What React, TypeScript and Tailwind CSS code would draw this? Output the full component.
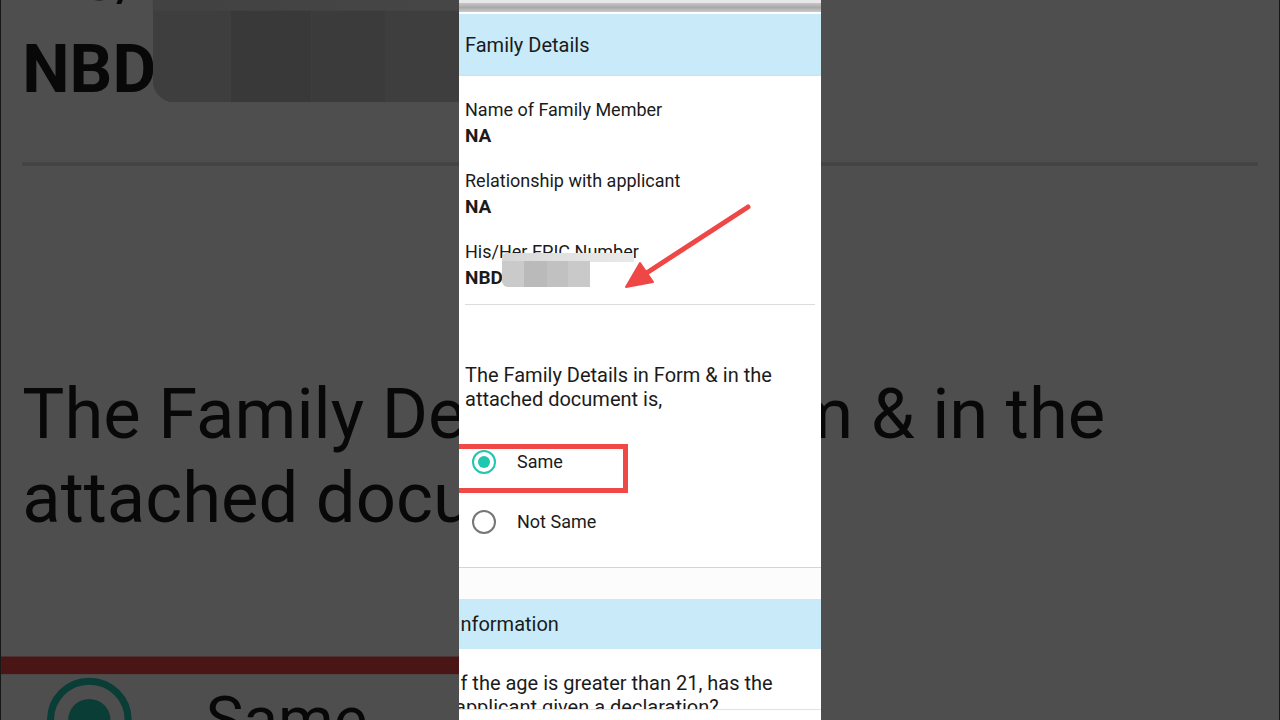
import React from "react";

const fields = [
  { label: "Name of Family Member", value: "NA" },
  { label: "Relationship with applicant", value: "NA" },
  { label: "His/Her EPIC Number", value: "NBD" },
];

const Radio = ({ checked, label }: { checked?: boolean; label: string }) => (
  <div className="flex h-[60px] items-center pl-[13px]">
    <div
      className={`flex h-[24px] w-[24px] items-center justify-center rounded-full border-2 ${
        checked ? "border-[#1fc6b0]" : "border-[#767676]"
      }`}
    >
      {checked && <div className="h-[12px] w-[12px] rounded-full bg-[#1fc6b0]" />}
    </div>
    <span className="ml-[21px] text-[18px] leading-[24px]">{label}</span>
  </div>
);

const Screen = () => (
  <div className="relative h-[720px] w-[362px] shrink-0 overflow-hidden bg-white font-['Roboto',sans-serif] text-[#1b1b1b]">
    <div className="h-[3px] bg-[#e8e8e8]" />
    <div className="h-[9px] bg-gradient-to-b from-[#c6c6c6] via-[#a9a9a9] to-[#cbcbcb]" />
    <div className="h-[2px] bg-white" />

    {/* section header */}
    <div className="flex h-[62px] items-center bg-[#c9eaf9] px-[6px] text-[20px] leading-[24px]">
      Family Details
    </div>

    <div className="border-b border-[#d4d4d4] bg-white pb-[15px] pt-[23px] shadow-[0_1px_3px_rgba(0,0,0,0.12)]">
      <div className="flex flex-col gap-[21px] px-[6px]">
        {fields.map((f) => (
          <div key={f.label}>
            <div className="text-[18px] leading-[22px]">{f.label}</div>
            <div className="mt-[2px] text-[19px] font-bold leading-[26px]">{f.value}</div>
          </div>
        ))}
      </div>
      <div className="mx-[6px] mt-[13px] h-px bg-[#dcdcdc]" />
      <div className="mt-[58px] px-[6px] text-[20px] leading-[24px]">
        The Family Details in Form &amp; in the attached document is,
      </div>
      <div className="mt-[21px]">
        <Radio checked label="Same" />
        <Radio label="Not Same" />
      </div>
    </div>

    <div className="h-[31px] bg-[#fcfcfc]" />

    <div className="flex h-[50px] items-center bg-[#c9eaf9] text-[20px] leading-[24px]">
      <span className="-ml-[4px]">Information</span>
    </div>
    <div className="h-[60px] overflow-hidden">
      <div className="-ml-[4px] mt-[22px] w-[340px] text-[20px] leading-[24px]">
        If the age is greater than 21, has the applicant given a declaration?
      </div>
    </div>
    <div className="h-px bg-[#e2e2e2]" />
    <div className="h-[10px] bg-white" />

    {/* pixelated patch over the EPIC number */}
    <div className="absolute left-[43px] top-[253px] h-[9px] w-[132px] rounded-tl-[5px] bg-gradient-to-r from-[#d6d6d6] via-[#e2e2e2] to-[#e9e9e9]" />
    <div className="absolute left-[43px] top-[261px] flex h-[26px] w-[88px] overflow-hidden rounded-bl-[6px]">
      <div className="w-[22px] bg-[#cacaca]" />
      <div className="w-[23px] bg-[#bababa]" />
      <div className="w-[21px] bg-[#c1c1c1]" />
      <div className="w-[22px] bg-[#c9c9c9]" />
    </div>

    {/* annotation box */}
    <div className="absolute left-[-10px] top-[444px] h-[49px] w-[179px] border-[5px] border-[#f04747]" />

    {/* annotation arrow */}
    <svg className="pointer-events-none absolute inset-0" width="362" height="720" viewBox="0 0 362 720">
      <line x1="289" y1="207" x2="186" y2="274" stroke="#ef4646" strokeWidth="5" strokeLinecap="round" />
      <polygon points="167,287 194,282 181,263" fill="#ef4646" stroke="#ef4646" strokeWidth="2" strokeLinejoin="round" />
    </svg>
  </div>
);

export default function App() {
  return (
    <div className="relative h-[720px] w-[1280px] overflow-hidden bg-[#4e4e4e]">
      <div className="absolute inset-0 flex origin-center scale-[3.53] justify-center" aria-hidden>
        <Screen />
      </div>
      <div className="absolute inset-0 bg-[#000000b1]" />
      <div className="relative flex justify-center">
        <Screen />
      </div>
    </div>
  );
}
